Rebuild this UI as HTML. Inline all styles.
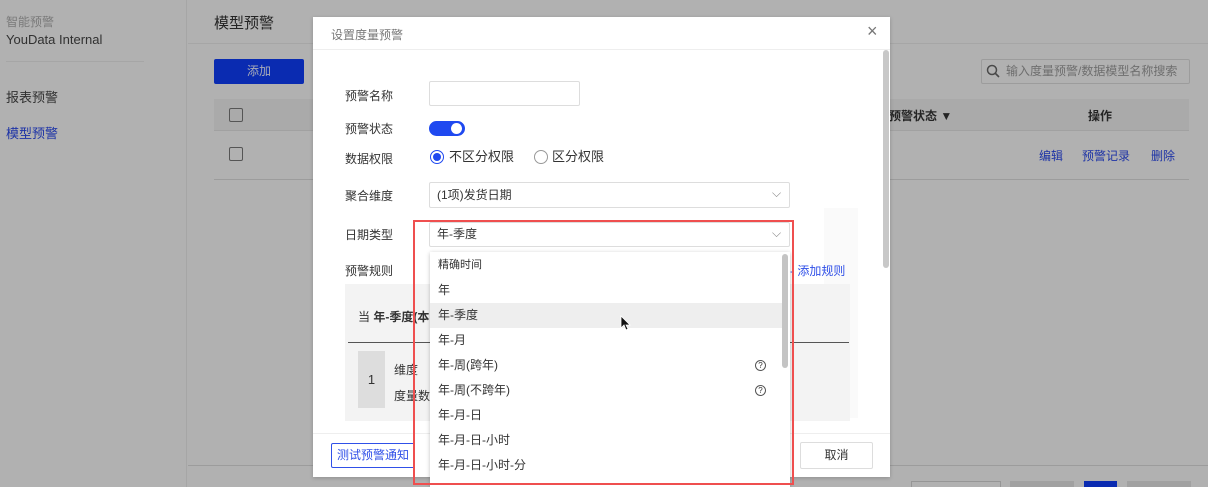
<!DOCTYPE html><html><head><meta charset="utf-8"><style>
*{margin:0;padding:0;box-sizing:border-box}
html,body{width:1208px;height:487px;overflow:hidden;background:#fff}
body{font-family:"Liberation Sans","Noto Sans CJK SC",sans-serif;font-size:12px;color:#333;position:relative}
.a{position:absolute}
</style></head><body>
<!-- background page (undimmed) -->
<div class="a" style="left:0;top:0;width:1208px;height:487px;background:#f5f5f5"></div>
<div class="a" style="left:0;top:0;width:187px;height:487px;border-right:1px solid #e6e6e6"></div>
<div class="a" style="left:6px;top:13px;color:#aaa">智能预警</div>
<div class="a" style="left:6px;top:32px;font-size:13px;color:#444">YouData Internal</div>
<div class="a" style="left:6px;top:61px;width:138px;border-top:1px solid #e6e6e6"></div>
<div class="a" style="left:6px;top:87px;font-size:13px;color:#444">报表预警</div>
<div class="a" style="left:6px;top:123px;font-size:13px;color:#2a48e6">模型预警</div>
<div class="a" style="left:214px;top:12px;font-size:15px;color:#333">模型预警</div>
<div class="a" style="left:188px;top:43px;width:1020px;border-top:1px solid #e6e6e6"></div>
<div class="a" style="left:214px;top:59px;width:90px;height:25px;background:#0e3cf5;color:#e8ecff;text-align:center;line-height:25px;border-radius:2px">添加</div>
<div class="a" style="left:214px;top:99px;width:975px;height:32px;background:#ececec;border-bottom:1px solid #e0e0e0"></div>
<div class="a" style="left:229px;top:108px;width:14px;height:14px;border:1px solid #777;border-radius:2px"></div>
<div class="a" style="left:229px;top:147px;width:14px;height:14px;border:1px solid #777;border-radius:2px"></div>
<div class="a" style="left:214px;top:179px;width:975px;border-top:1px solid #d8d8d8"></div>
<div class="a" style="left:981px;top:59px;width:209px;height:25px;border:1px solid #d8d8d8;border-radius:2px;color:#999;line-height:23px;padding-left:24px">输入度量预警/数据模型名称搜索</div>
<svg class="a" style="left:986px;top:64px" width="14" height="14"><circle cx="6" cy="6" r="4.5" stroke="#666" stroke-width="1.5" fill="none"/><path d="M9 9l4 4" stroke="#666" stroke-width="1.6"/></svg>
<div class="a" style="left:889px;top:107px;font-weight:bold;color:#333">预警状态 ▼</div>
<div class="a" style="left:1088px;top:107px;font-weight:bold;color:#333">操作</div>
<div class="a" style="left:1039px;top:147px;color:#2a48e6">编辑</div>
<div class="a" style="left:1082px;top:147px;color:#2a48e6">预警记录</div>
<div class="a" style="left:1151px;top:147px;color:#2a48e6">删除</div>
<div class="a" style="left:188px;top:465px;width:1020px;border-top:1px solid #d8d8d8"></div>
<div class="a" style="left:911px;top:481px;width:90px;height:6px;border:1px solid #d0d0d0;border-bottom:0"></div>
<div class="a" style="left:1010px;top:481px;width:64px;height:6px;background:#e0e0e0"></div>
<div class="a" style="left:1084px;top:481px;width:33px;height:6px;background:#0e3cf5"></div>
<div class="a" style="left:1127px;top:481px;width:64px;height:6px;background:#e0e0e0"></div>
<!-- mask -->
<div class="a" style="left:0;top:0;width:1208px;height:487px;background:rgba(0,0,0,0.28)"></div>
<!-- dialog -->
<div class="a" style="left:313px;top:17px;width:577px;height:460px;background:#fff;box-shadow:0 1px 4px rgba(0,0,0,.2)"></div>
<div class="a" style="left:331px;top:26px;color:#777;font-size:12px">设置度量预警</div>
<div class="a" style="left:867px;top:21px;font-size:18px;color:#777">×</div>
<div class="a" style="left:313px;top:49px;width:577px;border-top:1px solid #eee"></div>
<div class="a" style="left:883px;top:50px;width:6px;height:218px;background:#c8c8c8;border-radius:3px"></div>
<div class="a" style="left:345px;top:87px;color:#333">预警名称</div>
<div class="a" style="left:429px;top:81px;width:151px;height:25px;border:1px solid #ddd;border-radius:2px"></div>
<div class="a" style="left:345px;top:120px">预警状态</div>
<div class="a" style="left:429px;top:121px;width:36px;height:15px;background:#1f49f0;border-radius:8px"></div>
<div class="a" style="left:451px;top:123px;width:11px;height:11px;background:#fff;border-radius:50%"></div>
<div class="a" style="left:345px;top:150px">数据权限</div>
<div class="a" style="left:430px;top:150px;width:14px;height:14px;border:1px solid #1f49f0;border-radius:50%"></div>
<div class="a" style="left:433px;top:153px;width:8px;height:8px;background:#1f49f0;border-radius:50%"></div>
<div class="a" style="left:449px;top:149px;font-size:13px;line-height:16px">不区分权限</div>
<div class="a" style="left:534px;top:150px;width:14px;height:14px;border:1px solid #999;border-radius:50%"></div>
<div class="a" style="left:552px;top:149px;font-size:13px;line-height:16px">区分权限</div>
<div class="a" style="left:345px;top:187px">聚合维度</div>
<div class="a" style="left:429px;top:182px;width:361px;height:26px;border:1px solid #ddd;border-radius:2px;padding-left:7px;line-height:24px">(1项)发货日期</div>
<div class="a" style="left:772px;top:186px;color:#888">⌵</div>
<div class="a" style="left:824px;top:208px;width:34px;height:210px;background:#fafafa"></div>
<div class="a" style="left:345px;top:226px">日期类型</div>
<div class="a" style="left:429px;top:222px;width:361px;height:25px;border:1px solid #ddd;border-radius:2px;padding-left:7px;line-height:23px">年-季度</div>
<div class="a" style="left:772px;top:226px;color:#888">⌵</div>
<div class="a" style="left:345px;top:262px">预警规则</div>
<div class="a" style="left:790px;top:262px;color:#3050e8">- 添加规则</div>
<div class="a" style="left:345px;top:284px;width:505px;height:137px;background:#f3f3f3"></div>
<div class="a" style="left:358px;top:308px;font-weight:bold;color:#333"><span style="font-weight:normal">当</span> 年-季度(本</div>
<div class="a" style="left:348px;top:342px;width:501px;border-top:1px solid #555"></div>
<div class="a" style="left:358px;top:351px;width:27px;height:57px;background:#ddd;text-align:center;line-height:57px;font-size:13px">1</div>
<div class="a" style="left:394px;top:361px">维度</div>
<div class="a" style="left:394px;top:387px">度量数</div>
<div class="a" style="left:313px;top:433px;width:577px;border-top:1px solid #eee"></div>
<div class="a" style="left:331px;top:443px;width:84px;height:25px;border:1px solid #3050e8;border-radius:2px;color:#3050e8;text-align:center;line-height:23px">测试预警通知</div>
<div class="a" style="left:800px;top:442px;width:73px;height:27px;border:1px solid #ddd;border-radius:2px;text-align:center;line-height:25px">取消</div>
<!-- dropdown -->
<div class="a" style="left:430px;top:252px;width:360px;height:235px;background:#fff;box-shadow:0 1px 4px rgba(0,0,0,.25)"></div>
<div class="a" style="left:430px;top:303px;width:352px;height:25px;background:#eee"></div>
<div class="a" style="left:782px;top:254px;width:6px;height:114px;background:#c4c4c4;border-radius:3px"></div>
<div class="a" style="left:438px;top:258px;font-size:11px;line-height:14px">精确时间</div>
<div class="a" style="left:438px;top:283px;line-height:14px">年</div>
<div class="a" style="left:438px;top:308px;line-height:14px">年-季度</div>
<div class="a" style="left:438px;top:333px;line-height:14px">年-月</div>
<div class="a" style="left:438px;top:358px;line-height:14px">年-周(跨年)</div>
<div class="a" style="left:438px;top:383px;line-height:14px">年-周(不跨年)</div>
<div class="a" style="left:438px;top:408px;line-height:14px">年-月-日</div>
<div class="a" style="left:438px;top:433px;line-height:14px">年-月-日-小时</div>
<div class="a" style="left:438px;top:458px;line-height:14px">年-月-日-小时-分</div>
<div class="a" style="left:755px;top:360px;width:11px;height:11px;border:1px solid #555;border-radius:50%;font-size:8px;text-align:center;line-height:9px">?</div>
<div class="a" style="left:755px;top:385px;width:11px;height:11px;border:1px solid #555;border-radius:50%;font-size:8px;text-align:center;line-height:9px">?</div>
<svg class="a" style="left:620px;top:315px" width="12" height="16"><path d="M1 1v12l3-3 2 5 2-1-2-4h4z" fill="#111" stroke="#fff" stroke-width=".8"/></svg>
<div class="a" style="left:413px;top:220px;width:381px;height:265px;border:2px solid #ef4f4f"></div>
</body></html>
